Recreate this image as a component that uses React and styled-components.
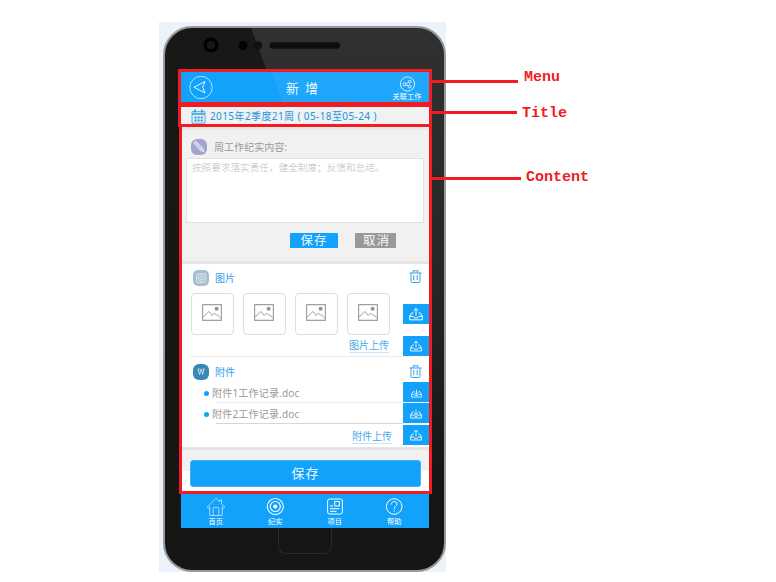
import React from "react";
import styled, { createGlobalStyle, css } from "styled-components";

const BLUE = "#12a1fb";
const RED = "#ef1c23";

const GlobalStyle = createGlobalStyle`
  * { box-sizing: border-box; }
  body { margin: 0; background: #fff; }
`;

const Page = styled.main`
  position: relative;
  width: 776px;
  height: 582px;
  overflow: hidden;
  padding: 22px 0 0 159px;
  background: #fff;
  font-family: "Noto Sans", "Noto Sans CJK SC", sans-serif;
`;

const Backdrop = styled.div`
  width: 287px;
  height: 550px;
  padding: 4px 0 0 4px;
  background: #ebf2fa;
  overflow: hidden;
`;

const Phone = styled.div`
  position: relative;
  width: 283px;
  height: 546px;
  border: 2px solid #999;
  border-radius: 29px;
  background: linear-gradient(180deg, #181818, #151515);
  overflow: hidden;
  padding: 0 0 0 16px;
`;

const Gloss = styled.div`
  position: absolute;
  inset: 0;
  pointer-events: none;
  clip-path: polygon(86px 0, 100% 0, 100% 100%, 264px 100%, 123px 100px);
  background: linear-gradient(180deg, rgba(255,255,255,.105), rgba(255,255,255,.07) 45%, rgba(255,255,255,0) 85%);
`;

const Earpiece = styled.div`
  position: relative;
  height: 43px;
  display: flex;
  align-items: flex-start;
  padding: 9px 0 0 21px;
`;

const Screen = styled.div`
  position: relative;
  z-index: 1;
  width: 248px;
  height: 457px;
  background: #f1f1f1;
  display: flex;
  flex-direction: column;
`;

const MenuBar = styled.header`
  height: 33px;
  flex: none;
  display: grid;
  grid-template-columns: 42px 1fr 43px;
  align-items: center;
  background: linear-gradient(70deg, ${BLUE} 0 39%, #20a7fb 39.5%);
  color: #fff;
`;

const BackButton = styled.div`
  display: flex;
  padding: 1px 0 0 8px;
`;

const Heading = styled.h1`
  margin: 0;
  padding-right: 5px;
  font-size: 13px;
  line-height: 20px;
  font-weight: 350;
  text-align: center;
  word-spacing: 2.5px;
`;

const RelatedWork = styled.div`
  height: 33px;
  padding: 5px 1px 0 0;
  display: flex;
  flex-direction: column;
  align-items: center;
  font-size: 7.2px;
  line-height: 9px;
  white-space: nowrap;
  svg { flex: none; }
  span { margin-top: -1.5px; }
`;

const DateBar = styled.div`
  height: 23px;
  flex: none;
  display: flex;
  align-items: center;
  gap: 4px;
  padding: 1px 0 0 10px;
  color: #2094df;
  font-size: 10px;
  line-height: 14px;
  letter-spacing: ${({ $tracking }) => $tracking}px;
  white-space: nowrap;
`;

const Editor = styled.section`
  height: 137px;
  flex: none;
  border-top: 3px solid #e6e6e6;
  border-bottom: 3px solid #e5e5e5;
  padding: 9px 5px 0;
`;

const SectionTitle = styled.div`
  display: flex;
  align-items: center;
  gap: ${({ $gap }) => $gap || 6}px;
  height: 16px;
  color: ${({ $muted }) => ($muted ? "#999" : "#319fe9")};
  font-size: 10px;
  line-height: 14px;
`;

const EditorTitle = styled(SectionTitle)`
  padding-left: 5px;
  font-size: 10px;
  letter-spacing: .05px;
`;

const TextBox = styled.div`
  height: 65px;
  margin-top: 3px;
  padding: 1px 5px;
  border: 1px solid #e1e1e1;
  background: #fff;
  color: #bdbdbd;
  font-family: "Liberation Serif", "Noto Sans CJK SC", serif;
  font-size: 9.65px;
  font-weight: 300;
  line-height: 15px;
  white-space: nowrap;
`;

const Actions = styled.div`
  display: flex;
  gap: 17px;
  padding: 10px 0 0 104px;
`;

const SmallButton = styled.div`
  width: ${({ $width }) => $width}px;
  height: 15px;
  border-radius: 1px;
  background: ${({ $muted }) => ($muted ? "#999" : BLUE)};
  color: #fff;
  font-size: 12.5px;
  font-weight: 350;
  line-height: 15px;
  text-align: center;
  letter-spacing: 1px;
  padding-left: ${({ $muted }) => ($muted ? 2 : 0)}px;
`;

const Panel = styled.section`
  height: ${({ $height }) => $height}px;
  flex: none;
  background: #fff;
  display: grid;
  grid-template-columns: 1fr 26px;
  ${({ $divided }) => $divided && css`
    background: linear-gradient(#ececec, #ececec) 9px 100% / 214px 1px no-repeat #fff;
  `}
`;

const PanelMain = styled.div`
  padding: ${({ $top }) => $top}px 0 0 12px;
`;

const Side = styled.div`
  display: flex;
  flex-direction: column;
  align-items: center;
  padding-top: ${({ $top }) => $top}px;
  svg { display: block; flex: none; }
`;

const TrashButton = styled.div`
  padding-right: 1px;
`;

const TransferButton = styled.div`
  width: 26px;
  height: 20px;
  flex: none;
  margin-top: ${({ $space }) => $space}px;
  background: ${BLUE};
  display: flex;
  align-items: center;
  justify-content: center;
`;

const Thumbs = styled.div`
  display: flex;
  gap: 9px;
  margin: 7px 0 0 -2px;
`;

const Thumb = styled.div`
  width: 43px;
  height: 42px;
  flex: none;
  border: 1px solid #dedede;
  border-radius: 4px;
  display: flex;
  align-items: center;
  justify-content: center;
  padding: 0 1px 3px 0;
`;

const UploadLink = styled.div`
  width: fit-content;
  margin: ${({ $top }) => $top}px ${({ $right }) => $right}px 0 auto;
  border-bottom: 1px solid #c6e3fa;
  color: #4aa9e8;
  font-size: 10px;
  line-height: 14px;
  height: 15px;
`;

const Files = styled.div`
  padding: 2px 0 0 11px;
`;

const FileRow = styled.div`
  height: 21px;
  display: flex;
  align-items: center;
  gap: 3px;
  color: #999;
  font-size: 10px;
  line-height: 14px;
  letter-spacing: .2px;
  background: linear-gradient(${({ $line }) => $line}, ${({ $line }) => $line}) 12px 100% / 188px 1px no-repeat;
  &::before {
    content: "";
    width: 5px;
    height: 5px;
    margin-top: 1px;
    border-radius: 50%;
    background: ${BLUE};
  }
`;

const SaveArea = styled.div`
  height: 47px;
  flex: none;
  border-top: 3px solid #e5e5e5;
  padding: 10px 8px 0 9px;
  background: linear-gradient(#f1f1f1 0 21px, #fff 21px);
`;

const SaveButton = styled.div`
  height: 27px;
  border: 1px solid #42b3fb;
  border-radius: 3px;
  background: ${BLUE};
  color: #fff;
  font-size: 13px;
  font-weight: 350;
  line-height: 25px;
  text-align: center;
  letter-spacing: 1px;
`;

const NavBar = styled.nav`
  flex: 1;
  display: grid;
  grid-template-columns: repeat(4, 59.5px);
  padding: 3px 0 0 5px;
  background: ${BLUE};
`;

const NavItem = styled.div`
  display: flex;
  flex-direction: column;
  align-items: center;
  color: #fff;
  font-size: 7.2px;
  line-height: 9px;
  svg { flex: none; }
`;

const HomeKey = styled.div`
  width: 54px;
  height: 26px;
  margin-left: 97px;
  border: 1px solid #292929;
  border-top: 0;
  border-radius: 0 0 8px 8px;
`;

const Frame = styled.div`
  position: absolute;
  left: ${({ $x }) => $x}px;
  top: ${({ $y }) => $y}px;
  width: ${({ $w }) => $w}px;
  height: ${({ $h }) => $h}px;
  border: 3px solid ${RED};
  z-index: 2;
`;

const Callout = styled.div`
  position: absolute;
  left: 432px;
  top: ${({ $y }) => $y}px;
  z-index: 2;
  display: flex;
  align-items: flex-start;
  color: ${RED};
  font: bold 15px/16px "Liberation Mono", monospace;
  &::before {
    content: "";
    width: ${({ $length }) => $length}px;
    height: 3px;
    margin: 10px ${({ $gap }) => $gap}px 0 0;
    background: ${RED};
  }
  span { margin-top: ${({ $shift }) => $shift}px; }
`;

const Line = ({ size, w = size, h = size, box = `0 0 ${w} ${h}`, color = "#fff", stroke = 1, children }) => (
  <svg width={w} height={h} viewBox={box} fill="none" stroke={color} strokeWidth={stroke} strokeLinejoin="round">
    {children}
  </svg>
);

const BackIcon = () => (
  <Line size={24} stroke={0.9}>
    <circle cx="12" cy="11.5" r="11.2" opacity=".75" />
    <path d="M5 11.2 16 5.5l-2.4 5.7L16 17Z" />
  </Line>
);

const ShareIcon = () => (
  <Line size={17} stroke={0.8}>
    <circle cx="8.5" cy="8" r="7.1" />
    <circle cx="5.7" cy="8.3" r="1.5" /><circle cx="10.7" cy="5.7" r="1.4" /><circle cx="10.7" cy="10.6" r="1.4" />
    <path d="m7.1 7.6 2.3-1.2M7.1 9l2.3 1" />
  </Line>
);

const CalendarIcon = () => (
  <Line w={15} h={15} color="#2798e2">
    <path d="M1 5V2.7h13V5M1 5.8v8.4h13V5.8" strokeWidth=".8" />
    <path d="M1 5h13" strokeWidth="1.4" />
    <path d="M4 .5v3M11 .5v3" strokeWidth="1.6" />
    <path d="M3.5 8.5h8.2M3.5 11.5h8.2" strokeWidth="2" strokeDasharray="2 1.1" />
  </Line>
);

const PenIcon = () => (
  <Line size={16}>
    <rect width="16" height="16" rx="6" fill="#a3a4d0" stroke="none" />
    <path d="m2.8 3.8 1.8-1.7 6.9 6.8 1.5 3.7-3.8-1.4Z" fill="#b4b5da" strokeWidth=".8" />
    <path d="m4 3.2 6.8 7M9.3 11l2.1-2" strokeWidth=".7" />
  </Line>
);

const CameraIcon = () => (
  <Line size={16}>
    <rect width="16" height="16" rx="5" fill="#a5bdcd" stroke="none" />
    <g stroke="#e0e9ef" strokeWidth=".9">
      <rect x="3.5" y="3.7" width="9.3" height="9" rx="1.5" />
      <circle cx="8.1" cy="8.4" r="3.1" /><circle cx="8.1" cy="8.4" r="1.4" />
      <path d="M4.8 5h1M10.8 5h1" />
    </g>
  </Line>
);

const WordIcon = () => (
  <Line size={16}>
    <rect width="16" height="16" rx="6" fill="#3986b7" stroke="none" />
    <path d="m5 5 1.5 5.5L8.2 5l1.4 5.5L11 5M4.8 5h1.8M9.5 5h2" stroke="#d6e6ef" strokeWidth=".9" />
  </Line>
);

const ImageIcon = () => (
  <Line w={20} h={17} color="#a1a1a1">
    <rect x=".6" y=".7" width="18.8" height="15.6" strokeWidth="1.2" />
    <path d="m1 13 6-5.5 3.2 4 2.3-2.3 2.1 2 .8-.7 4 4.3" />
    <circle cx="14.6" cy="4.8" r="2" fill="#949494" stroke="none" />
  </Line>
);

const TrashIcon = () => (
  <Line w={13} h={13} color="#329fe7">
    <path d="M.5 3h12M4 2.7V.8h5v1.9M2 3.3v8q0 1.2 1.2 1.2h6.6q1.2 0 1.2-1.2v-8M4.8 5v5.3M8.2 5v5.3" />
  </Line>
);

const TransferIcon = ({ down, size = 12 }) => (
  <Line w={size} h={size} box="0 0 12 12" stroke={0.85}>
    <path d="M3.7 5H2.4L.6 8v3h10.8V8L9.6 5H8.3M.6 8h3l1 1.3h2.8l1-1.3h3" />
    <path d={down ? "M6 2.8V8M3.8 6 6 8l2.2-2" : "M6 7.6V1.2M4 3.2l2-2 2 2"} />
  </Line>
);

const HomeIcon = () => (
  <Line w={20} h={20} stroke={0.8}>
    <g opacity=".78">
      <path d="M1.3 10 10 1.3l3.5 3.4V3h2v3.8L18.7 10l-1 1.2-1.5-1.3v8.6h-12.5V9.9l-1.5 1.3Z" />
      <path d="M7.2 18.5v-7q0-1 1-1h3.6q1 0 1 1v7" />
    </g>
  </Line>
);

const RecordIcon = () => (
  <Line size={20} stroke={1.1}>
    <circle cx="10.3" cy="9.5" r="8" /><circle cx="10.3" cy="9.5" r="5" />
    <circle cx="10.3" cy="9.5" r="2.1" fill="#fff" stroke="none" />
  </Line>
);

const ProjectIcon = () => (
  <Line size={20}>
    <rect x="2.6" y="2" width="14.8" height="15" rx="2" />
    <path d="M9.7 4.4h4.7V9H9.7ZM5 9h3M5 11.7h9.5M5 14.3h6.5" />
  </Line>
);

const HelpIcon = () => (
  <Line size={20}>
    <circle cx="10.2" cy="9.5" r="7.8" />
    <path d="M7.4 7.5c0-4 5.8-3.8 5.6-.3-.1 2.1-2.8 2-2.8 4.7M10.2 13.2v1.4" />
  </Line>
);

const Sensors = () => (
  <svg width="145" height="20" viewBox="0 0 145 20" fill="#030303">
    <circle cx="9" cy="8" r="5.8" fill="none" stroke="#000" strokeWidth="3.4" />
    <circle cx="41" cy="8.5" r="4.4" /><circle cx="56" cy="8.5" r="4.2" fill="#101010" />
    <rect x="67.5" y="5.2" width="70.5" height="6.6" rx="3.3" fill="#0e0e0e" />
  </svg>
);

const navItems = [
  ["首页", HomeIcon],
  ["纪实", RecordIcon],
  ["项目", ProjectIcon],
  ["帮助", HelpIcon],
];

export default function App() {
  return (
    <Page>
      <GlobalStyle />
      <Backdrop>
        <Phone>
          <Gloss />
          <Earpiece><Sensors /></Earpiece>
          <Screen>
            <MenuBar>
              <BackButton><BackIcon /></BackButton>
              <Heading>新 增</Heading>
              <RelatedWork><ShareIcon /><span>关联工作</span></RelatedWork>
            </MenuBar>
            <DateBar $tracking={0.4}>
              <CalendarIcon /><span>2015年2季度21周 ( 05-18至05-24 )</span>
            </DateBar>
            <Editor>
              <EditorTitle $muted $gap={7}><PenIcon />周工作纪实内容:</EditorTitle>
              <TextBox>按照要求落实责任，健全制度；反馈和总结。</TextBox>
              <Actions>
                <SmallButton $width={48}>保存</SmallButton>
                <SmallButton $width={41} $muted>取消</SmallButton>
              </Actions>
            </Editor>
            <Panel $height={93} $divided>
              <PanelMain $top={6}>
                <SectionTitle><CameraIcon />图片</SectionTitle>
                <Thumbs>
                  {[0, 1, 2, 3].map((i) => <Thumb key={i}><ImageIcon /></Thumb>)}
                </Thumbs>
                <UploadLink $top={3} $right={14}>图片上传</UploadLink>
              </PanelMain>
              <Side $top={6}>
                <TrashButton><TrashIcon /></TrashButton>
                <TransferButton $space={21}><TransferIcon size={14} /></TransferButton>
                <TransferButton $space={12}><TransferIcon /></TransferButton>
              </Side>
            </Panel>
            <Panel $height={90}>
              <PanelMain $top={7}>
                <SectionTitle><WordIcon />附件</SectionTitle>
                <Files>
                  <FileRow $line="#ececec">附件1工作记录.doc</FileRow>
                  <FileRow $line="#d6d6d6">附件2工作记录.doc</FileRow>
                </Files>
                <UploadLink $top={5} $right={11}>附件上传</UploadLink>
              </PanelMain>
              <Side $top={8}>
                <TrashButton><TrashIcon /></TrashButton>
                <TransferButton $space={4}><TransferIcon down size={11} /></TransferButton>
                <TransferButton $space={1}><TransferIcon down /></TransferButton>
                <TransferButton $space={2}><TransferIcon /></TransferButton>
              </Side>
            </Panel>
            <SaveArea><SaveButton>保存</SaveButton></SaveArea>
            <NavBar>
              {navItems.map(([label, Icon]) => (
                <NavItem key={label}><Icon />{label}</NavItem>
              ))}
            </NavBar>
          </Screen>
          <HomeKey />
        </Phone>
      </Backdrop>
      <Frame $x={178} $y={69} $w={254} $h={36} />
      <Frame $x={178} $y={104} $w={254} $h={23} />
      <Frame $x={179} $y={124} $w={253} $h={370} />
      <Callout $y={70} $length={86} $gap={6} $shift={0}><span>Menu</span></Callout>
      <Callout $y={101} $length={85} $gap={5} $shift={5}><span>Title</span></Callout>
      <Callout $y={167} $length={89} $gap={5} $shift={3}><span>Content</span></Callout>
    </Page>
  );
}
